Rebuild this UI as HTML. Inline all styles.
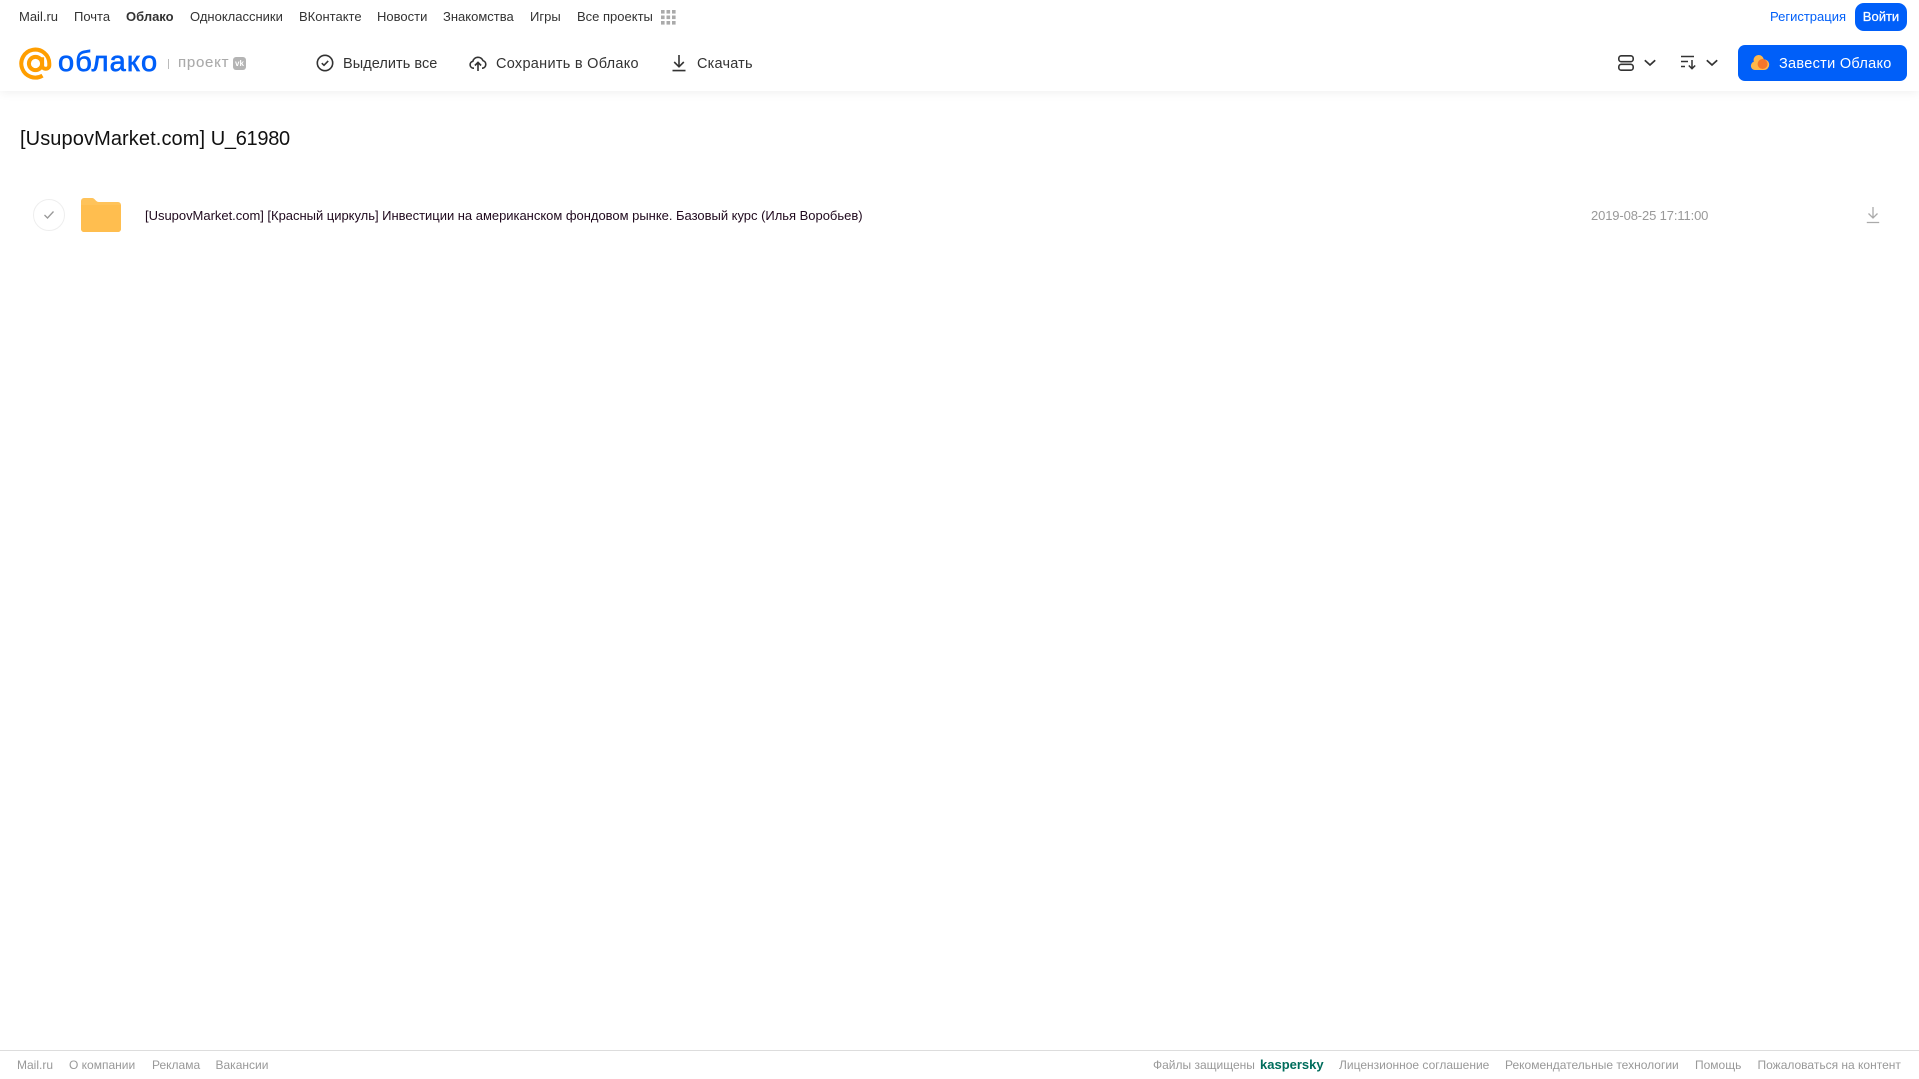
<!DOCTYPE html>
<html lang="ru"><head><meta charset="utf-8"><title>Облако</title>
<style>
html,body{margin:0;padding:0;background:#fff}
body{width:1919px;height:1079px;position:relative;overflow:hidden;font-family:"Liberation Sans","Noto Sans CJK SC",sans-serif}
.t{position:absolute;white-space:nowrap;line-height:20px;height:20px}
.n{top:7px;font-size:13px;color:#333}
.a{top:54px;font-size:14.5px;color:#333}
.f{top:1055px;font-size:12px;color:#999}
svg{position:absolute;display:block}
#hd{position:absolute;left:0;top:0;width:1919px;height:91px;background:#fff;box-shadow:0 1px 10px rgba(0,0,0,.07)}
</style></head><body>
<div id="hd"></div>
<div class="t n" style="left:19px">Mail.ru</div>
<div class="t n" style="left:74px">Почта</div>
<div class="t n" style="left:126px;font-weight:bold">Облако</div>
<div class="t n" style="left:190px">Одноклассники</div>
<div class="t n" style="left:299px">ВКонтакте</div>
<div class="t n" style="left:377px">Новости</div>
<div class="t n" style="left:443px">Знакомства</div>
<div class="t n" style="left:530px">Игры</div>
<div class="t n" style="left:577px">Все проекты</div>
<svg style="left:661px;top:10px" width="15" height="15" fill="#aaa"><rect x="0" y="0" width="3.6" height="3.6"/><rect x="5.5" y="0" width="3.6" height="3.6"/><rect x="11" y="0" width="3.6" height="3.6"/><rect x="0" y="5.5" width="3.6" height="3.6"/><rect x="5.5" y="5.5" width="3.6" height="3.6"/><rect x="11" y="5.5" width="3.6" height="3.6"/><rect x="0" y="11" width="3.6" height="3.6"/><rect x="5.5" y="11" width="3.6" height="3.6"/><rect x="11" y="11" width="3.6" height="3.6"/></svg>
<div class="t n" style="left:1770px;color:#005ff9">Регистрация</div>
<div style="position:absolute;left:1855px;top:3px;width:52px;height:28px;border-radius:9px;background:#005ff9;color:#fff;font-size:13px;-webkit-text-stroke:.25px #fff;line-height:28px;text-align:center">Войти</div>

<svg style="left:19px;top:47px" width="33" height="33" viewBox="0 0 33 33" fill="none" stroke="#ff9e00" stroke-width="4"><circle cx="16.5" cy="16.5" r="6.6"/><path d="M23.1 10.2V18.2a3.6 3.6 0 0 0 7.2 0V16.5A14 14 0 1 0 23.5 28.6"/></svg>
<div class="t" style="left:58px;top:45px;height:34px;line-height:34px;font-size:29px;color:#005ff9;-webkit-text-stroke:.7px #005ff9;letter-spacing:1.1px">облако</div>
<div style="position:absolute;left:168px;top:59px;width:1px;height:10px;background:#bbb"></div>
<div class="t" style="left:178px;top:53px;font-size:15px;color:#aaa;-webkit-text-stroke:.1px #aaa;letter-spacing:.75px">проект</div>
<div style="position:absolute;left:233px;top:57px;width:13px;height:13px;border-radius:3px;background:#b4b4b4;color:#fff;font-size:8px;font-weight:bold;line-height:13px;text-align:center">vk</div>

<svg style="left:316px;top:54px" width="18" height="18" viewBox="0 0 18 18" fill="none" stroke="#333" stroke-width="1.6"><circle cx="9" cy="9" r="7.7"/><path d="M5.8 9.2 8 11.3 12.2 6.9"/></svg>
<div class="t a" style="left:343px;letter-spacing:.05px">Выделить все</div>
<svg style="left:469px;top:54px" width="18" height="18" viewBox="0 0 18 18" fill="none" stroke="#333" stroke-width="1.6"><path d="M5 14.2H4.4A3.5 3.5 0 0 1 3.8 7.3 5.4 5.4 0 0 1 14 6.6 3.9 3.9 0 0 1 13.4 14.2H13"/><path d="M9 17V8.6M5.9 11.5 9 8.4 12.1 11.5"/></svg>
<div class="t a" style="left:496px;letter-spacing:.28px">Сохранить в Облако</div>
<svg style="left:671px;top:54px" width="16" height="18" viewBox="0 0 16 18" fill="none" stroke="#333" stroke-width="1.6"><path d="M8 1V12.5M3.2 8 8 12.8 12.8 8M1.5 16.6H14.5"/></svg>
<div class="t a" style="left:697px;letter-spacing:.2px">Скачать</div>

<svg style="left:1618px;top:54px" width="17" height="18" viewBox="0 0 17 18" fill="none" stroke="#333" stroke-width="1.6"><rect x=".8" y="1.8" width="14.4" height="5.9" rx="2.5"/><rect x=".8" y="10.3" width="14.4" height="5.9" rx="2.5"/></svg>
<svg style="left:1644px;top:59px" width="12" height="8" viewBox="0 0 12 8" fill="none" stroke="#333" stroke-width="1.7"><path d="M.8 1.2 6 6 11.2 1.2"/></svg>
<svg style="left:1680px;top:55px" width="17" height="15" viewBox="0 0 17 15" fill="none" stroke="#333" stroke-width="1.5"><path d="M1 1.5H14M1 6.5H8M1 11.5H5M12 5V13.5M8.8 10.5 12 13.7 15.2 10.5"/></svg>
<svg style="left:1706px;top:59px" width="12" height="8" viewBox="0 0 12 8" fill="none" stroke="#333" stroke-width="1.7"><path d="M.8 1.2 6 6 11.2 1.2"/></svg>

<div style="position:absolute;left:1738px;top:45px;width:169px;height:36px;border-radius:7px;background:#005ff9"></div>
<svg style="left:1750px;top:54px" width="20" height="17" viewBox="0 0 20 17"><path d="M5 16a4.2 4.2 0 0 1-1.2-8.2A5.2 5.2 0 0 1 8.5 1 5.2 5.2 0 0 1 13.8 5.4 5.3 5.3 0 0 1 14 16Z" fill="#ffb74a"/><circle cx="12.6" cy="10" r="5" fill="#f5762a"/></svg>
<div class="t" style="left:1779px;top:54px;font-size:14.5px;color:#fff;letter-spacing:.3px">Завести Облако</div>

<div class="t" style="left:20px;top:126px;height:26px;line-height:26px;font-size:20px;color:#111"><span style="letter-spacing:.1px">[UsupovMarket.com]</span> <span style="letter-spacing:-.3px">U_61980</span></div>

<div style="position:absolute;left:33px;top:199px;width:30px;height:30px;border:1px solid #eee;border-radius:50%"></div>
<svg style="left:43px;top:210px" width="12" height="10" viewBox="0 0 12 10" fill="none" stroke="#999" stroke-width="1.3"><path d="M1.5 5 4.5 8 10.5 1.5"/></svg>
<svg style="left:81px;top:198px" width="40" height="34" viewBox="0 0 40 34"><path d="M0 3a3 3 0 0 1 3-3H11C14 0 14.5 4 18 4H37a3 3 0 0 1 3 3V31a3 3 0 0 1-3 3H3a3 3 0 0 1-3-3Z" fill="#ffc35a"/><path d="M0 7H40V31a3 3 0 0 1-3 3H3a3 3 0 0 1-3-3Z" fill="#ffbe4f"/></svg>
<div class="t" style="left:145px;top:206px;font-size:13px;color:#200a1e;letter-spacing:-.02px">[UsupovMarket.com] [Красный циркуль] Инвестиции на американском фондовом рынке. Базовый курс (Илья Воробьев)</div>
<div class="t" style="left:1591px;top:206px;font-size:13px;color:#999;letter-spacing:-.13px">2019-08-25 17:11:00</div>
<svg style="left:1866px;top:206px" width="14" height="18" viewBox="0 0 14 18" fill="none" stroke="#aaa" stroke-width="1.3"><path d="M7 1V12M2.5 7.5 7 12 11.5 7.5M.8 16.5H13.2"/></svg>

<div style="position:absolute;left:0;top:1050px;width:1919px;height:1px;background:#ddd"></div>
<div class="t f" style="left:17px">Mail.ru</div>
<div class="t f" style="left:69px">О компании</div>
<div class="t f" style="left:152px">Реклама</div>
<div class="t f" style="left:215.5px">Вакансии</div>
<div class="t f" style="left:1153px">Файлы защищены</div>
<div class="t f" style="left:1260px;color:#006d5c;font-weight:bold;font-size:13px">kaspersky</div>
<div class="t f" style="left:1339px">Лицензионное соглашение</div>
<div class="t f" style="left:1505px">Рекомендательные технологии</div>
<div class="t f" style="left:1695px">Помощь</div>
<div class="t f" style="left:1757.5px">Пожаловаться на контент</div>
</body></html>
